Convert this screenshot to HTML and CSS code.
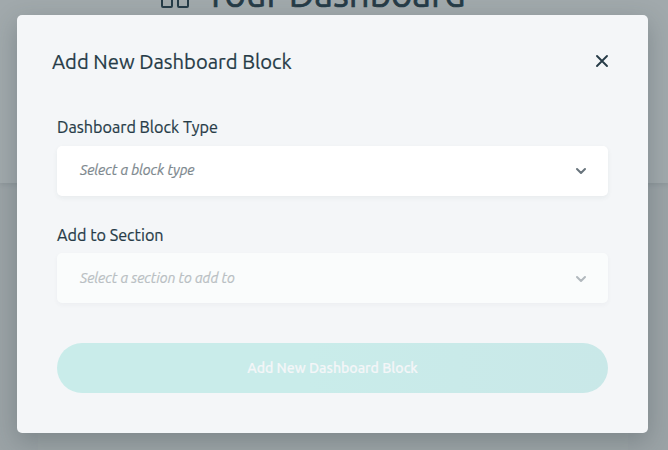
FILE: index.html
```html
<!DOCTYPE html>
<html lang="en">
<head>
<meta charset="utf-8">
<title>Your Dashboard</title>
<link rel="stylesheet" href="styles.css">
</head>
<body>
<div class="page">
  <header class="page-header">
    <svg class="grid-icon" width="28" height="28" viewBox="0 0 28 28" fill="none" stroke="currentColor" stroke-width="2"><rect x="1" y="1" width="10" height="11" rx="1"/><rect x="17" y="1" width="10" height="11" rx="1"/><rect x="1" y="16" width="10" height="11" rx="1"/><rect x="17" y="16" width="10" height="11" rx="1"/></svg>
    <h1>Your Dashboard</h1>
  </header>
  <main class="content"></main>
</div>
<div class="overlay">
  <section class="modal" role="dialog" aria-modal="true">
    <div class="modal-head">
      <h2>Add New Dashboard Block</h2>
      <svg class="close" width="14" height="14" viewBox="0 0 14 14" fill="none" stroke="currentColor" stroke-width="1.9" stroke-linecap="round"><path d="M2 2l10 10M12 2L2 12"/></svg>
    </div>
    <form class="form">
      <div class="field">
        <div class="label">Dashboard Block Type</div>
        <div class="select"><span>Select a block type</span><svg width="12" height="8" viewBox="0 0 12 8" fill="none" stroke="currentColor" stroke-width="2" stroke-linecap="round" stroke-linejoin="round"><path d="M2 2l4 4 4-4"/></svg></div>
      </div>
      <div class="field">
        <div class="label">Add to Section</div>
        <div class="select disabled"><span>Select a section to add to</span><svg width="12" height="8" viewBox="0 0 12 8" fill="none" stroke="currentColor" stroke-width="2" stroke-linecap="round" stroke-linejoin="round"><path d="M2 2l4 4 4-4"/></svg></div>
      </div>
      <div class="submit">Add New Dashboard Block</div>
    </form>
  </section>
</div>
</body>
</html>
```
FILE: styles.css
```css
* { box-sizing: border-box; }
body {
  margin: 0;
  height: 450px;
  overflow: hidden;
  font-family: Ubuntu, "Noto Sans", sans-serif;
  color: #263b47;
  -webkit-text-stroke: .2px currentColor;
}
.page { height: 450px; background: #9ba3a6; overflow: hidden; }
.page-header {
  display: flex;
  gap: 16px;
  height: 183px;
  padding-left: 161px;
  background: #a1a9ac;
  box-shadow: 0 2px 4px rgba(50, 65, 70, .12);
}
.grid-icon { flex: none; margin-top: -20px; color: #263c48; }
h1 { margin: -30px 0 0; font-size: 36.4px; line-height: 48px; font-weight: 400; -webkit-text-stroke: .7px currentColor; white-space: nowrap; }
h2 { margin: 0; padding-top: 2px; font-size: 20.2px; line-height: 28px; font-weight: 400; }
.content { height: 267px; margin: 0 40px 0 38px; background: #9da5a7; }
.overlay { position: absolute; inset: 0; padding: 14.5px 20px 0 17px; }
.modal {
  height: 418.6px;
  padding: 32.5px 35px 0;
  border-radius: 5px;
  background: #f4f6f8;
  box-shadow: 0 8px 24px rgba(40, 55, 60, .28);
}
.modal-head { display: flex; justify-content: space-between; align-items: center; height: 28px; padding-right: 4px; }
.close { margin-top: -1px; }
.form { margin: 40px 5px 0; }
.field { height: 107.8px; }
.label { height: 30.5px; font-size: 16.2px; line-height: 25px; }
.select {
  display: flex;
  align-items: center;
  justify-content: space-between;
  height: 50px;
  padding: 0 21px 0 23px;
  border-radius: 5px;
  background: #fff;
  box-shadow: 0 2px 5px rgba(40, 60, 70, .06);
  color: #7d888e;
  font-size: 14.3px;
  letter-spacing: -.09px;
  font-style: italic;
}
.select span { padding-bottom: 2px; }
.select svg { color: #68747c; }
.disabled { background: #fafcfc; color: #b9bfc3; box-shadow: 0 2px 5px rgba(40, 60, 70, .04); }
.disabled span { padding-bottom: 0; }
.disabled svg { position: relative; top: .5px; color: #b1b8bd; }
.submit {
  display: flex;
  align-items: center;
  justify-content: center;
  height: 50px;
  margin-top: 12.7px;
  border-radius: 25px;
  background: linear-gradient(90deg, #c9ecea 45%, #c9e8e8);
  color: #f4f6f8;
  font-size: 14.1px;
  font-weight: 500;
}
```
